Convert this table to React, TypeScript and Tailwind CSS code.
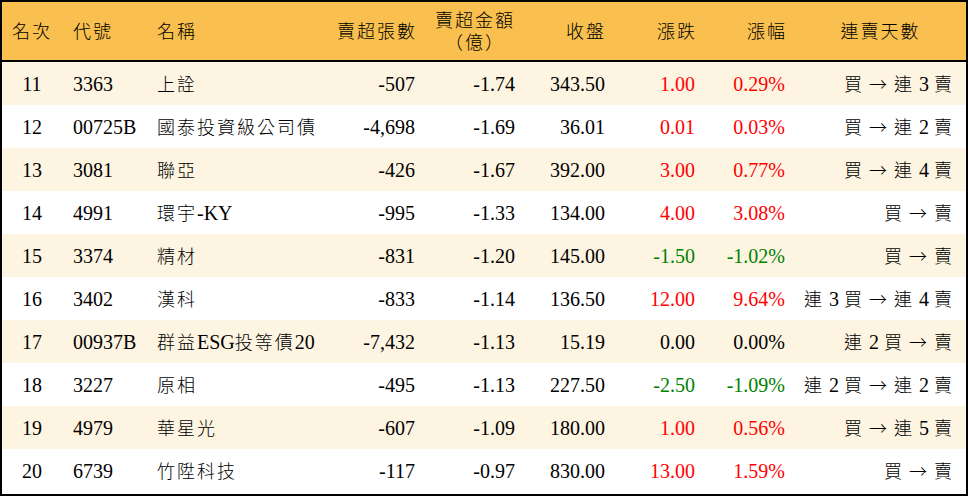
import React from "react";

type Row = {
  rank: number;
  code: string;
  name: string;
  lots: string;
  amount: string;
  close: string;
  change: string;
  pct: string;
  streak: string;
};

const rows: Row[] = [
  { rank: 11, code: "3363", name: "上詮", lots: "-507", amount: "-1.74", close: "343.50", change: "1.00", pct: "0.29%", streak: "買 → 連 3 賣" },
  { rank: 12, code: "00725B", name: "國泰投資級公司債", lots: "-4,698", amount: "-1.69", close: "36.01", change: "0.01", pct: "0.03%", streak: "買 → 連 2 賣" },
  { rank: 13, code: "3081", name: "聯亞", lots: "-426", amount: "-1.67", close: "392.00", change: "3.00", pct: "0.77%", streak: "買 → 連 4 賣" },
  { rank: 14, code: "4991", name: "環宇-KY", lots: "-995", amount: "-1.33", close: "134.00", change: "4.00", pct: "3.08%", streak: "買 → 賣" },
  { rank: 15, code: "3374", name: "精材", lots: "-831", amount: "-1.20", close: "145.00", change: "-1.50", pct: "-1.02%", streak: "買 → 賣" },
  { rank: 16, code: "3402", name: "漢科", lots: "-833", amount: "-1.14", close: "136.50", change: "12.00", pct: "9.64%", streak: "連 3 買 → 連 4 賣" },
  { rank: 17, code: "00937B", name: "群益ESG投等債20", lots: "-7,432", amount: "-1.13", close: "15.19", change: "0.00", pct: "0.00%", streak: "連 2 買 → 賣" },
  { rank: 18, code: "3227", name: "原相", lots: "-495", amount: "-1.13", close: "227.50", change: "-2.50", pct: "-1.09%", streak: "連 2 買 → 連 2 賣" },
  { rank: 19, code: "4979", name: "華星光", lots: "-607", amount: "-1.09", close: "180.00", change: "1.00", pct: "0.56%", streak: "買 → 連 5 賣" },
  { rank: 20, code: "6739", name: "竹陞科技", lots: "-117", amount: "-0.97", close: "830.00", change: "13.00", pct: "1.59%", streak: "買 → 賣" },
];

const cols = "grid grid-cols-[60px_84px_184px_95px_100px_90px_90px_90px_171px] items-center";

const CJK = /([\u2190-\u21ff\u3000-\u9fff\uff00-\uffef]+)/;

// CJK runs get a slightly smaller glyph with tracking, like the source font
function Txt({ s }: { s: string }) {
  const parts = s.split(CJK);
  return (
    <>
      {parts.map((p, i) =>
        i % 2 === 1 ? (
          <span key={i} className="text-[18px] font-light tracking-[2px] font-['Noto_Sans_CJK_TC',sans-serif]">
            {p}
          </span>
        ) : (
          <span key={i}>{p}</span>
        )
      )}
    </>
  );
}

function tone(v: string) {
  if (v.startsWith("-")) return "text-[#008000]";
  if (parseFloat(v) === 0) return "text-black";
  return "text-[#ff0000]";
}

export default function App() {
  return (
    <div className="w-[968px] h-[496px] border-2 border-black bg-white text-black text-[20px] leading-none font-['Liberation_Serif','Noto_Sans_CJK_TC',serif]">
      <div className={`${cols} h-[60px] bg-[#f9c04f] border-b-2 border-black`}>
        <div className="text-center"><Txt s="名次" /></div>
        <div className="pl-[11px]"><Txt s="代號" /></div>
        <div className="pl-[11px]"><Txt s="名稱" /></div>
        <div className="text-right pr-[8px]"><Txt s="賣超張數" /></div>
        <div className="text-right pr-[10px]">
          <div className="inline-flex flex-col items-center gap-[2px] leading-[19px]">
            <span><Txt s="賣超金額" /></span>
            <span><Txt s="（億）" /></span>
          </div>
        </div>
        <div className="text-right pr-[9px]"><Txt s="收盤" /></div>
        <div className="text-right pr-[8px]"><Txt s="漲跌" /></div>
        <div className="text-right pr-[8px]"><Txt s="漲幅" /></div>
        <div className="text-center"><Txt s="連賣天數" /></div>
      </div>

      {rows.map((r, i) => (
        <div key={r.rank} className={`${cols} h-[43px] ${i % 2 === 0 ? "bg-[#fdf5e2]" : "bg-white"}`}>
          <div className="text-center">{r.rank}</div>
          <div className="pl-[11px]">{r.code}</div>
          <div className="pl-[11px] whitespace-nowrap"><Txt s={r.name} /></div>
          <div className="text-right pr-[10px]">{r.lots}</div>
          <div className="text-right pr-[10px]">{r.amount}</div>
          <div className="text-right pr-[10px]">{r.close}</div>
          <div className={`text-right pr-[10px] ${tone(r.change)}`}>{r.change}</div>
          <div className={`text-right pr-[10px] ${tone(r.pct)}`}>{r.pct}</div>
          <div className="text-right pr-[12px] whitespace-nowrap"><Txt s={r.streak} /></div>
        </div>
      ))}
    </div>
  );
}
